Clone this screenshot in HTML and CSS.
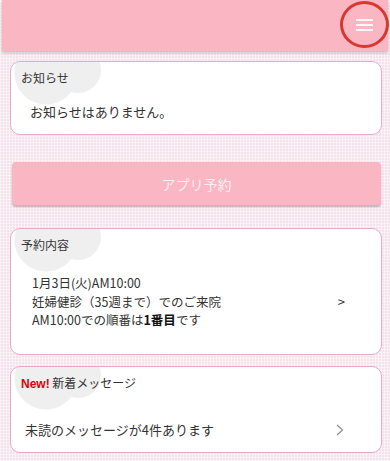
FILE: index.html
```html
<!DOCTYPE html>
<html lang="ja">
<head>
<meta charset="utf-8">
<title>ホーム</title>
<link rel="stylesheet" href="styles.css">
</head>
<body>
<header class="topbar">
  <button class="menu-btn" aria-label="メニュー">
    <span class="bars"><span></span><span></span><span></span></span>
  </button>
</header>
<main class="content">
  <section class="card card-notice">
    <h2 class="card-title">お知らせ</h2>
    <p class="notice-text">お知らせはありません。</p>
  </section>

  <button class="reserve-btn">アプリ予約</button>

  <section class="card card-booking">
    <h2 class="card-title">予約内容</h2>
    <p class="booking-date">1月3日(火)AM10:00</p>
    <div class="booking-row">
      <p class="booking-detail">妊婦健診（35週まで）でのご来院<br>AM10:00での順番は<b>1番目</b>です</p>
      <span class="gt">&gt;</span>
    </div>
  </section>

  <section class="card card-message">
    <h2 class="card-title"><span class="new">New!</span> 新着メッセージ</h2>
    <div class="message-row">
      <p class="message-text">未読のメッセージが4件あります</p>
      <svg class="chev" width="8" height="12" viewBox="0 0 8 12"><path d="M1 1 L6.5 6 L1 11" fill="none" stroke="#8a8a8a" stroke-width="1.1"/></svg>
    </div>
  </section>
</main>
</body>
</html>
```

FILE: styles.css
```css
* { box-sizing: border-box; }
html, body { margin: 0; padding: 0; }
body {
  width: 390px;
  height: 461px;
  overflow: hidden;
  font-family: "Noto Sans CJK JP", "Noto Sans", Roboto, sans-serif;
  color: #333;
  background-color: #f4e3eb;
  background-image:
    repeating-linear-gradient(0deg, rgba(255,255,255,0.45) 0 1px, transparent 1px 3px),
    repeating-linear-gradient(90deg, rgba(255,255,255,0.45) 0 1px, transparent 1px 3px);
}
p, h2 { margin: 0; }

.topbar {
  height: 51px;
  margin: 0 2px;
  background: #fbb6c4;
  box-shadow: 0 2px 3px rgba(120, 100, 110, 0.35);
  display: flex;
  justify-content: flex-end;
  align-items: flex-start;
  padding-top: 1px;
  position: relative;
  z-index: 1;
}
.menu-btn {
  width: 49px;
  height: 47px;
  margin-right: -1px;
  border: 3px solid #d6392f;
  border-radius: 50%;
  background: transparent;
  padding: 0;
  display: flex;
  align-items: center;
  justify-content: center;
}
.bars {
  display: flex;
  flex-direction: column;
  gap: 3px;
  width: 17px;
}
.bars span {
  display: block;
  height: 2px;
  background: #fff6f8;
}

.content {
  padding: 10px 8px 0 10px;
  display: flex;
  flex-direction: column;
}

.card {
  border: 1.5px solid #e8a9cf;
  border-radius: 10px;
  padding: 7px 10px 0 10px;
  background:
    radial-gradient(circle at 35px 11px, #efefef 31px, transparent 32px),
    radial-gradient(circle at 67px 8px, #efefef 22.5px, transparent 23.5px),
    #fff;
}
.card-title {
  font-size: 12px;
  font-weight: normal;
  line-height: 18px;
  color: #333;
}
.card-notice { height: 74px; }
.notice-text {
  font-size: 13px;
  line-height: 20px;
  margin-top: 15px;
  padding-left: 9px;
}

.reserve-btn {
  margin: 27px 1px 0 2px;
  height: 43px;
  border: none;
  border-radius: 4px;
  background: #fbb6c4;
  color: #fdeef2;
  font-family: "Noto Sans CJK JP", "Noto Sans", sans-serif;
  font-size: 14px;
  box-shadow: 0 2px 2px rgba(110, 90, 100, 0.4);
}

.card-booking {
  margin-top: 23px;
  height: 127px;
}
.booking-date {
  font-size: 12.5px;
  line-height: 20px;
  margin-top: 19px;
  padding-left: 11px;
}
.booking-row {
  display: flex;
  justify-content: space-between;
  align-items: flex-start;
  margin-top: 0;
  padding: 0 26px 0 11px;
}
.booking-detail {
  font-size: 12.5px;
  line-height: 18px;
}
.booking-detail b { font-weight: bold; color: #111; }
.gt {
  font-size: 13px;
  line-height: 18px;
  color: #333;
}

.card-message {
  margin-top: 11px;
  height: 87px;
}
.new {
  color: #e0000b;
  font-weight: bold;
  font-family: "Liberation Sans", Arial, sans-serif;
}
.message-row {
  display: flex;
  justify-content: space-between;
  align-items: center;
  margin-top: 27px;
  padding: 0 27px 0 4px;
}
.message-text {
  font-size: 13px;
  line-height: 20px;
}
.chev { display: block; }
```
